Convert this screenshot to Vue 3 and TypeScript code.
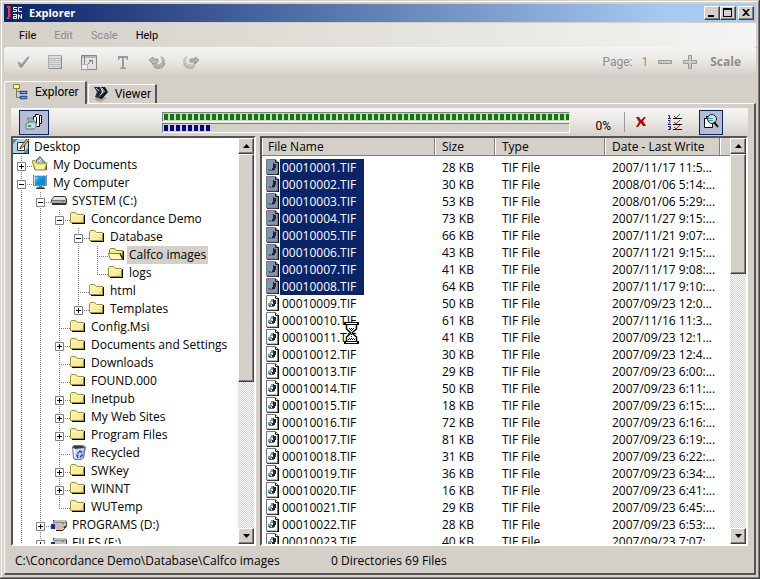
<script setup lang="ts">
import { ref } from 'vue'

interface TreeRow {
  label: string
  // One character per indent column: | line, t tee, l last, + / - boxes, p last box collapsed
  guides: string
  icon: string
}

interface FileRow {
  name: string
  size: string
  date: string
}

const tree: TreeRow[] = [
  { label: 'Desktop', guides: '', icon: 'desktop' },
  { label: 'My Documents', guides: '+', icon: 'documents' },
  { label: 'My Computer', guides: '-', icon: 'computer' },
  { label: 'SYSTEM (C:)', guides: '|-', icon: 'drive' },
  { label: 'Concordance Demo', guides: '||-', icon: 'folder' },
  { label: 'Database', guides: '|||-', icon: 'folder' },
  { label: 'Calfco images', guides: '||||t', icon: 'open' },
  { label: 'logs', guides: '||||l', icon: 'folder' },
  { label: 'html', guides: '|||t', icon: 'folder' },
  { label: 'Templates', guides: '|||p', icon: 'folder' },
  { label: 'Config.Msi', guides: '||t', icon: 'folder' },
  { label: 'Documents and Settings', guides: '||+', icon: 'folder' },
  { label: 'Downloads', guides: '||t', icon: 'folder' },
  { label: 'FOUND.000', guides: '||t', icon: 'folder' },
  { label: 'Inetpub', guides: '||+', icon: 'folder' },
  { label: 'My Web Sites', guides: '||+', icon: 'folder' },
  { label: 'Program Files', guides: '||+', icon: 'folder' },
  { label: 'Recycled', guides: '||t', icon: 'recycle' },
  { label: 'SWKey', guides: '||+', icon: 'folder' },
  { label: 'WINNT', guides: '||+', icon: 'folder' },
  { label: 'WUTemp', guides: '||l', icon: 'folder' },
  { label: 'PROGRAMS (D:)', guides: '|+', icon: 'shared' },
  { label: 'FILES (E:)', guides: '|+', icon: 'shared' },
]

const details: [number, string][] = [
  [28, '2007/11/17 11:5...'],
  [30, '2008/01/06 5:14:...'],
  [53, '2008/01/06 5:29:...'],
  [73, '2007/11/27 9:15:...'],
  [66, '2007/11/21 9:07:...'],
  [43, '2007/11/21 9:15:...'],
  [41, '2007/11/17 9:08:...'],
  [64, '2007/11/17 9:10:...'],
  [50, '2007/09/23 12:0...'],
  [61, '2007/11/16 11:3...'],
  [41, '2007/09/23 12:1...'],
  [30, '2007/09/23 12:4...'],
  [29, '2007/09/23 6:00:...'],
  [50, '2007/09/23 6:11:...'],
  [18, '2007/09/23 6:15:...'],
  [72, '2007/09/23 6:16:...'],
  [81, '2007/09/23 6:19:...'],
  [31, '2007/09/23 6:22:...'],
  [36, '2007/09/23 6:34:...'],
  [16, '2007/09/23 6:41:...'],
  [29, '2007/09/23 6:45:...'],
  [28, '2007/09/23 6:53:...'],
  [40, '2007/09/23 7:07:...'],
]

const files: FileRow[] = details.map(([kb, date], i) => ({
  name: `000${10001 + i}.TIF`,
  size: `${kb} KB`,
  date,
}))

const selectedFolder = ref('Calfco images')
const selectedCount = ref(8)

// Selected files out of all files in the folder
const currentShare = ref((selectedCount.value / 69) * 100)

const tabs = ['Explorer', 'Viewer']
const activeTab = ref('Explorer')
</script>

<template>
  <svg class="sprite" aria-hidden="true">
    <symbol id="i-folder" viewBox="0 0 16 16">
      <path d="M2 14h13V5h-1v8H2z" fill="#000" />
      <path d="M1 5V3l1-1h4l2 2h6v9H1z" fill="#f8ef9c" />
      <path d="M8 13l6-6v6z" fill="#eedf86" />
      <path d="M.5 12.500V3.500l1-1h4l2 2h6v8z" fill="none" stroke="#a09038" />
      <path d="M1.500 12V5.500h12" fill="none" stroke="#fffce0" />
    </symbol>
    <symbol id="i-open" viewBox="0 0 16 16">
      <path d="M2 14h14V5h-1v8H3z" fill="#000" />
      <path d="M1.500 8V3.500l1-1h4l2 2h6v8" fill="#f3e78d" stroke="#8d8030" />
      <path d="M.5 7.500h11l3 6h-12z" fill="#fff9b8" stroke="#8d8030" />
      <path d="M12 7l3 6" stroke="#000" />
    </symbol>
    <symbol id="i-drive" viewBox="0 0 16 16">
      <path d="M0 8l3-4h11l2 3v4l-1 2H1z" fill="#333" />
      <path d="M1 8l2-3h11l1 3z" fill="#dcdcdc" />
      <path d="M1 8h14v3H1z" fill="#a8a8a8" />
      <path d="M1 8.500h13" stroke="#777" />
      <path d="M3 6h9" stroke="#f4f4f4" />
      <path d="M11 9h2v1h-2z" fill="#21c23b" />
    </symbol>
    <symbol id="i-shared" viewBox="0 0 16 16">
      <path d="M2 4h12l2 2v4l-1 2H2V6z" fill="#444" />
      <path d="M2 6l2-2h10l1 2v4H2z" fill="#c4c4c4" />
      <path d="M2 6.500h13" stroke="#888" />
      <path d="M11 7h2v1h-2z" fill="#21c23b" />
      <path d="M0 8h4v5H0z" fill="#1b2c9c" />
      <path d="M4 10l3-1h5l1 2-2 3H6l-2-1z" fill="#dcb7a0" />
      <path d="M5 14.500h7l2-3" fill="none" stroke="#222" />
    </symbol>
    <symbol id="i-computer" viewBox="0 0 16 16">
      <path d="M1 1h14v11H1z" fill="#8c8c8c" />
      <path d="M2 1h12v1H3v9H2z" fill="#d6d6d6" />
      <path d="M3 2h10v9H3z" fill="#1c9be8" />
      <path d="M3 11l10-9v9z" fill="#0788dc" />
      <path d="M3 3h4L3 7z" fill="#63c5fa" />
      <path d="M7 12h3v1h2l1 2H4l1-2h2z" fill="#333" />
      <path d="M5 13h7" stroke="#aaa" />
    </symbol>
    <symbol id="i-desktop" viewBox="0 0 16 16">
      <path d="M0 1h16v15H0z" fill="#17232d" />
      <path d="M0 1h15v14H0z" fill="#a9d8ee" />
      <path d="M0 1h5L0 6zM10 15h5v-5z" fill="#3f93bf" />
      <path d="M4 4h7v9H4z" fill="#fff" />
      <path d="M4.500 4.500h7v8h-7z" fill="none" stroke="#333" />
      <path d="M7 11l1-3 6-7 2 1-6 7z" fill="#efb040" />
      <path d="M7 11l1-3 6-7M7 11l3-2 5-6" fill="none" stroke="#251b10" stroke-width=".7" />
    </symbol>
    <symbol id="i-documents" viewBox="0 0 16 16">
      <path d="M2 13l13 1V8l-4-4-3-4-4 4z" fill="#5d5320" />
      <path d="M3 7l5-6 5 6v4H3z" fill="#dcecff" stroke="#45658f" stroke-width=".8" />
      <path d="M7 3l4 4M6 5l3 3M9 3l4 5" stroke="#4b7fc4" stroke-width=".7" />
      <path d="M0 5l2-1 3 3h10l-2 7H3z" fill="#efdf70" stroke="#82752c" stroke-width=".8" />
      <path d="M3 9h10l-1 4H5z" fill="#fbf3a2" />
    </symbol>
    <symbol id="i-recycle" viewBox="0 0 16 16">
      <path d="M2 3l2-2h9l3 2-2 11-3 2H5l-2-2z" fill="#6c7484" />
      <path d="M3 4h11l-1 10-3 1H6l-2-1z" fill="#cfd8e8" />
      <path d="M4 2h8l2 2-9 1-2-2z" fill="#333b48" />
      <path d="M4 5l1 8" stroke="#fff" />
      <path d="M7 9l3-3 3 2-2 1-1-1-2 2zM12 9l1 3-3 2v-2l1-1zM6 10l3 1-1 1 1 2H7z" fill="#1656c8" />
    </symbol>
    <symbol id="i-tif" viewBox="0 0 13 17">
      <path d="M1 16h12V3h-1v12H1z" fill="#000" />
      <path class="tif-page" d="M.5.500h9l2 2v12.500H.5z" />
      <path d="M9.500 1v2.500h2.500" fill="none" stroke="#222" />
      <path d="M5 4h2v3H5zM4 6h1v2H4z" fill="#8b98a0" />
      <path d="M7 4h1v1h2v4H9v2H7v1H5v-1h1V9h1z" fill="#1c2733" />
      <path d="M2 8h4v2H2z" fill="#58b0b8" />
      <path d="M2 10h3v1H2zM3 11h5v1H3z" fill="#667" />
    </symbol>
  </svg>

  <div class="window">
    <header class="titlebar">
      <svg class="logo" viewBox="0 0 17 16" aria-hidden="true">
        <path d="M0 1h4v11l-2 2H0v-2h1V3H0z" fill="#e0435a" />
        <path d="M3 1h1v11l-2 2z" fill="#8c2442" />
        <path d="M10 2.500H6.500v2h3v2H6M15 2.500h-3.500v4H15M6 9.500h3.500v4h-3v-2h3M11.500 14V9.500l3 4V9" fill="none" stroke="#fff" />
      </svg>
      <h1>Explorer</h1>
      <div class="window-buttons">
        <button aria-label="Minimize"><svg viewBox="0 0 16 14"><path d="M4 9h6v2H4z" /></svg></button>
        <button aria-label="Maximize"><svg viewBox="0 0 16 14"><path d="M3 2h9v9H3zM4 4v6h7V4z" fill-rule="evenodd" /></svg></button>
        <button class="close" aria-label="Close"><svg viewBox="0 0 16 14"><path d="M4 3h2l2 2 2-2h2L9 6.500l3 3.500h-2L8 8l-2 2H4l3-3.500z" /></svg></button>
      </div>
    </header>

    <nav class="menubar" aria-label="Menu">
      <button>File</button>
      <button disabled>Edit</button>
      <button disabled>Scale</button>
      <button>Help</button>
    </nav>

    <div class="toolbar" role="toolbar" aria-label="Page tools">
      <button aria-label="Apply" disabled>
        <svg viewBox="0 0 24 18"><path d="M9 9l2 1 1 2 7-8h1l-7 10h-2z" fill="#999" stroke="#999" /></svg>
      </button>
      <button aria-label="Page" disabled>
        <svg viewBox="0 0 24 18">
          <path d="M5.500 2.500h13v13h-13z" fill="#ddd" stroke="#aaa" />
          <path d="M6 5.500h12M6 7.500h12M6 9.500h12M6 11.500h12M6 13.500h12" stroke="#bbb" />
          <path d="M18.500 3v13M6 15.500h13" stroke="#888" />
        </svg>
      </button>
      <button aria-label="Fit" disabled>
        <svg viewBox="0 0 24 18">
          <path d="M4.500 2.500h15v14h-15z" fill="#e4e2df" stroke="#888" />
          <path d="M5 4h14M7.500 3v8" stroke="#888" />
          <path d="M4.500 11.500h6v5h-6z" fill="#eee" stroke="#888" stroke-dasharray="1 1" />
          <path d="M11 11l4-4M12 7.500h3.500V11" fill="none" stroke="#777" />
        </svg>
      </button>
      <button aria-label="Text" disabled>
        <svg viewBox="0 0 24 18"><path d="M7 3h10v4h-1l-1-2h-2v9l2 1v1H9v-1l2-1V5H9L8 7H7z" fill="#999" /></svg>
      </button>
      <button aria-label="Rotate left" disabled>
        <svg viewBox="0 0 24 18">
          <path d="M7 10c0 7 13 8 13-1 0-3-1-5-5-6 3 4 2 8-1 8-3 1-4 0-5-2z" fill="#b3b1ae" />
          <path d="M9 14c4 3 10 1 11-4" fill="none" stroke="#979592" />
          <path d="M4 7l4-3v2h5v3l-2 2-2-1-1 1z" fill="#b9b7b4" stroke="#9b9996" />
        </svg>
      </button>
      <button aria-label="Rotate right" disabled>
        <svg viewBox="0 0 24 18">
          <path d="M17 10c0 7-13 8-13-1 0-3 1-5 5-6-3 4-2 8 1 8 3 1 4 0 5-2z" fill="#c6c4c0" />
          <path d="M16 13c-3 4-10 2-11-2" fill="none" stroke="#a3a19e" />
          <path d="M20 7l-4-3v2h-5v3h5v2z" fill="#b5b3b0" stroke="#979592" />
        </svg>
      </button>
      <div class="pager">
        <span>Page:</span>
        <span>1</span>
        <button aria-label="Previous page" disabled>
          <svg class="step" viewBox="0 0 16 16"><path d="M1.500 6.500h13v3h-13z" fill="#ccc" stroke="#999" /></svg>
        </button>
        <button aria-label="Next page" disabled>
          <svg class="step" viewBox="0 0 16 16"><path d="M6.500 1.500h3v5h5v3h-5v5h-3v-5h-5v-3h5z" fill="#ccc" stroke="#999" /></svg>
        </button>
        <button class="scale" disabled>Scale</button>
      </div>
    </div>

    <div class="tabs" role="tablist">
      <button
        v-for="tab in tabs"
        :key="tab"
        role="tab"
        :aria-selected="activeTab === tab"
        :class="['tab', { active: activeTab === tab }]"
        @click="activeTab = tab"
      >
        <svg v-if="tab === 'Explorer'" viewBox="0 0 16 18" aria-hidden="true">
          <path d="M3.500 5v9.500H7M4 8.500h3" fill="none" stroke="#777" />
          <path d="M.5 1.500h6v4h-6z" fill="#fff684" stroke="#8b812a" />
          <path d="M7.500 8.500h6v2h-6zM7.500 13.500h6v2h-6z" fill="#fff" stroke="#334f9c" stroke-width="1.500" />
        </svg>
        <svg v-else viewBox="0 0 16 18" aria-hidden="true">
          <path d="M2 13l6 4 6-4-6-2z" fill="#a8a8a8" />
          <path d="M1 2h6l2 5-4 6-3-1 2-5z" fill="#252c3c" />
          <path d="M8 2h4l3 5-6 7-4-1 6-6z" fill="#101722" />
          <path d="M3 3l3 3M9 3l3 4" stroke="#b8cbe0" />
          <path d="M2 14l4 2" stroke="#d58442" />
        </svg>
        {{ tab }}
      </button>
    </div>

    <main class="page">
      <div class="actions">
        <button class="pressed batch" aria-label="Batch scan">
          <svg viewBox="0 0 18 18">
            <path d="M8.500 12V3.500h2v-2h3l1 1h2v8h-2v3h-3" fill="#fff" stroke="#000" />
            <path d="M11.500 4v7M14.500 3v8" fill="none" stroke="#000" />
            <path d="M2 5h5l3 4H4z" fill="#a3b0b4" stroke="#7a878b" />
            <path d="M1 11l3-2h7v5l-2 2H1z" fill="#cdd5d5" stroke="#6d797d" />
            <path d="M3 12h3v2H3z" fill="#27ae60" />
            <path d="M7 9h3v1H7z" fill="#5ec8d0" />
          </svg>
        </button>
        <div class="meters">
          <div class="meter" role="progressbar" aria-label="Total" aria-valuenow="100">
            <div class="fill green" :style="{ width: '100%' }"></div>
          </div>
          <div class="meter" role="progressbar" aria-label="Current" :aria-valuenow="Math.round(currentShare)">
            <div class="fill blue" :style="{ width: currentShare + '%' }"></div>
          </div>
        </div>
        <span class="percent">0%</span>
        <button class="cancel" aria-label="Cancel">
          <svg viewBox="0 0 12 12"><path d="M1 1h3l2 3 3-3h2L8 5l3 5H8L6 7l-3 4H1l3-5z" fill="#c00000" /></svg>
        </button>
        <button class="ordered" aria-label="Options">
          <svg viewBox="0 0 16 18">
            <path d="M1 2.500h1.500V5M1 5.500h3M1 7.500h2v1.500L1 11.500h3M1 13.500h2.500v3H1M2 15h1" fill="none" stroke="#1b2a8a" />
            <path d="M6 5.500h9M6 11.500h9M6 16.500h9" stroke="#000" />
            <path d="M7 3l2 2 4-4M7 9l2 2 4-4M7 14l2 2 4-4" fill="none" stroke="#c22" />
          </svg>
        </button>
        <button class="pressed preview" aria-label="Preview">
          <svg viewBox="0 0 18 18">
            <path d="M2.500 5.500h2v-2h6v11h-8z" fill="#fff" stroke="#000" />
            <circle cx="10" cy="6" r="4.500" fill="#cde7ee" stroke="#222" />
            <path d="M6 5.500h5M6 7.500h5" stroke="#2f9bb3" />
            <path d="M12 9l4 5" stroke="#000" stroke-width="2" />
          </svg>
        </button>
      </div>

      <div class="panes">
        <section class="pane tree-pane">
          <ul class="tree" role="tree">
            <li v-for="row in tree" :key="row.label" role="treeitem" :aria-selected="row.label === selectedFolder">
              <svg v-for="(g, i) in row.guides.split('')" :key="i" class="guide" viewBox="0 0 19 18" aria-hidden="true">
                <path v-if="'|t+-'.includes(g)" class="dots" d="M8.500 0v18" />
                <path v-else class="dots" d="M8.500 0v11" />
                <path v-if="g !== '|'" class="dots" d="M8 10.500h11" />
                <template v-if="'+-p'.includes(g)">
                  <path d="M4.500 6.500h8v8h-8z" fill="#fff" stroke="#808080" />
                  <path d="M6 10.500h5" stroke="#000" />
                  <path v-if="g !== '-'" d="M8.500 8v5" stroke="#000" />
                </template>
              </svg>
              <button :class="{ selected: row.label === selectedFolder }" @click="selectedFolder = row.label">
                <svg class="icon" aria-hidden="true"><use :href="'#i-' + row.icon" /></svg>
                <span>{{ row.label }}</span>
              </button>
            </li>
          </ul>
          <div class="scrollbar">
            <button aria-label="Scroll tree up"><svg viewBox="0 0 7 4"><path d="M0 4h7L3.500 0z" /></svg></button>
            <div class="track"><div class="thumb" :style="{ height: '61%' }"></div></div>
            <button aria-label="Scroll tree down"><svg viewBox="0 0 7 4"><path d="M0 0h7L3.500 4z" /></svg></button>
          </div>
        </section>

        <section class="pane list-pane">
          <div class="list">
            <table>
              <colgroup>
                <col class="c-name" /><col class="c-size" /><col class="c-type" /><col class="c-date" /><col />
              </colgroup>
              <thead>
                <tr>
                  <th>File Name</th>
                  <th>Size</th>
                  <th>Type</th>
                  <th>Date - Last Write</th>
                  <td></td>
                </tr>
              </thead>
              <tbody>
                <tr v-for="(file, i) in files" :key="file.name" :class="{ chosen: i < selectedCount }">
                  <td class="name">
                    <div>
                      <svg class="tif" aria-hidden="true"><use href="#i-tif" /></svg>
                      <span>{{ file.name }}</span>
                    </div>
                  </td>
                  <td>{{ file.size }}</td>
                  <td>TIF File</td>
                  <td>{{ file.date }}</td>
                  <td></td>
                </tr>
              </tbody>
            </table>
          </div>
          <div class="scrollbar">
            <button aria-label="Scroll list up"><svg viewBox="0 0 7 4"><path d="M0 4h7L3.500 0z" /></svg></button>
            <div class="track"><div class="thumb" :style="{ height: '32%' }"></div></div>
            <button aria-label="Scroll list down"><svg viewBox="0 0 7 4"><path d="M0 0h7L3.500 4z" /></svg></button>
          </div>
          <svg class="hourglass" viewBox="0 0 15 22" aria-hidden="true">
            <path d="M2 2h11v5L9 10.500v1L13 15v5H2v-5l4-3.500v-1L2 7z" fill="#fff" />
            <path d="M0 0h15v3H0zM0 19h15v3H0z" />
            <path d="M2 1.500h11M2 20.500h11" stroke="#fff" />
            <path d="M2.500 3v4l4 3.500v1l-4 3.500v4M12.500 3v4l-4 3.500v1l4 3.500v4" fill="none" stroke="#000" stroke-width="1.500" />
            <path d="M5 6.500h6M6 7.500h4M7 8.500h2M7 12.500h1M7 14.500h2M5 16.500h6M4 17.500h8" stroke="#000" stroke-dasharray="1 1" />
          </svg>
        </section>
      </div>

      <footer class="status">
        <span class="path">C:\Concordance Demo\Database\Calfco images</span>
        <span>0 Directories 69 Files</span>
      </footer>
    </main>
  </div>
</template>

<style>
body {
  margin: 0;
  background: #d4d0c8;
}
</style>

<style scoped>
.sprite {
  display: none;
}

.window {
  display: flex;
  flex-direction: column;
  box-sizing: border-box;
  height: 100vh;
  padding: 4px;
  background: #d4d0c8;
  box-shadow: inset -1px -1px #404040, inset 1px 1px #d4d0c8, inset -2px -2px #808080, inset 2px 2px #fff;
  color: #000;
  font: 12px/18px 'Open Sans', sans-serif;
  overflow: hidden;
}

button {
  padding: 0;
  border: 0;
  background: none;
  color: inherit;
  font: inherit;
}

svg {
  display: block;
  flex: none;
}

.titlebar {
  display: flex;
  align-items: center;
  height: 18px;
  padding: 0 2px 0 3px;
  background: linear-gradient(90deg, #0a246a, #a6caf0 88%);
}

.logo {
  width: 17px;
  height: 16px;
}

.titlebar h1 {
  flex: 1;
  margin: 0 0 0 5px;
  color: #fff;
  font-size: 11px;
  line-height: 18px;
}

.window-buttons {
  display: flex;
}

.window-buttons button,
.scrollbar button,
.thumb {
  box-sizing: border-box;
  background: #d4d0c8;
  border: 1px solid;
  border-color: #fff #404040 #404040 #fff;
  box-shadow: inset -1px -1px #808080;
}

.window-buttons button {
  width: 16px;
  height: 14px;
}

.window-buttons svg {
  width: 16px;
  height: 14px;
  margin: -1px;
}

.window-buttons .close {
  margin-left: 2px;
}

.menubar {
  display: flex;
  gap: 18px;
  padding: 4px 15px 3px;
  border-top: 1px solid #d4d0c8;
  background: linear-gradient(90deg, #d4d0c8, #f5f4f2);
  font: 11px/17px Roboto, sans-serif;
}

button:disabled {
  color: #8c8c8c;
}

.toolbar {
  display: flex;
  align-items: center;
  height: 30px;
  border-radius: 3px;
  background: linear-gradient(#f6f5f3, #e9e7e3 50%, #d0ccc4);
}

.toolbar > button {
  display: flex;
  justify-content: center;
  width: 34px;
}

.toolbar > button svg {
  width: 24px;
  height: 18px;
}

.pager {
  display: flex;
  align-items: center;
  gap: 9px;
  margin-left: auto;
  padding-right: 15px;
  color: #8c8c8c;
  font: 12px/18px Roboto, sans-serif;
}

.step {
  width: 16px;
  height: 16px;
}

.scale {
  margin-left: 3px;
  font: bold 12px/18px 'Open Sans', sans-serif;
}

.tabs {
  display: flex;
  align-items: flex-end;
  padding-top: 4px;
}

.tab {
  display: flex;
  align-items: center;
  gap: 6px;
  box-sizing: border-box;
  height: 19px;
  padding: 0 4px;
  border: 1px solid #fff;
  border-right: 2px solid #555;
  border-bottom: 0;
  font: 12px/16px Roboto, sans-serif;
}

/* The selected tab overlaps the top edge of the page */
.tab.active {
  z-index: 1;
  height: 23px;
  margin: 0 1px -1px 0;
  padding: 0 6px 3px 8px;
  border-radius: 2px 0 0;
  background: #d4d0c8;
}

.tab svg {
  width: 16px;
  height: 18px;
}

.page {
  display: flex;
  flex: 1;
  flex-direction: column;
  min-height: 0;
  padding: 4px 6px 0;
  border: 1px solid #fff;
  border-right: 2px solid #555;
  border-bottom: 2px solid #555;
}

.actions {
  display: flex;
  align-items: center;
  height: 28px;
  padding: 0 25px 0 8px;
  background: linear-gradient(#f6f5f3, #e9e7e3 50%, #d4d0c8);
}

.pressed {
  display: flex;
  align-items: center;
  justify-content: center;
  box-sizing: border-box;
  height: 25px;
  border: 1px solid #0a246a;
  background: #b6bdd2;
}

.pressed svg {
  width: 18px;
  height: 18px;
}

.batch {
  width: 30px;
}

.preview {
  width: 24px;
}

.meters {
  display: flex;
  flex: 1;
  flex-direction: column;
  gap: 1px;
  margin-left: 113px;
}

.meter {
  height: 8px;
  padding-left: 1px;
  border: 1px solid;
  border-color: #808080 #fff #fff #808080;
  background: #d4d0c8;
}

.fill {
  box-sizing: border-box;
  height: 8px;
  border: solid transparent;
  border-width: 1px 0;
  background-clip: padding-box;
}

.green {
  background-image: repeating-linear-gradient(90deg, #008000 0 4px, transparent 4px 6px);
}

.blue {
  background-image: repeating-linear-gradient(90deg, #000090 0 4px, transparent 4px 6px);
}

.percent {
  padding: 8px 13px 0 25px;
  font: 12px/18px Roboto, sans-serif;
}

.cancel {
  padding: 4px 10px;
  border-left: 1px solid #999;
}

.cancel svg {
  width: 12px;
  height: 12px;
}

.ordered {
  padding: 0 16px 0 10px;
}

.ordered svg {
  width: 16px;
  height: 18px;
}

.panes {
  display: flex;
  flex: 1;
  gap: 4px;
  min-height: 0;
}

.pane {
  display: flex;
  box-sizing: border-box;
  border: 2px solid;
  border-color: #555 #fff #fff #555;
  background: #fff;
  overflow: hidden;
}

.tree-pane {
  flex: 0 0 245px;
}

.list-pane {
  position: relative;
  flex: 1;
  min-width: 0;
}

.tree {
  flex: 1;
  min-width: 0;
  margin: 0;
  padding: 0;
  list-style: none;
  overflow: hidden;
}

.tree li,
.tree button {
  display: flex;
  height: 18px;
  white-space: nowrap;
}

.tree button {
  gap: 3px;
}

.guide {
  width: 19px;
  height: 18px;
}

.dots {
  fill: none;
  stroke: #808080;
  stroke-dasharray: 1 1;
}

.icon {
  width: 16px;
  height: 16px;
}

.tree span {
  padding: 0 2px;
}

.selected span {
  background: #d4d0c8;
}

.scrollbar {
  display: flex;
  flex: 0 0 16px;
  flex-direction: column;
}

.scrollbar button {
  display: flex;
  align-items: center;
  justify-content: center;
  height: 16px;
}

.scrollbar svg {
  width: 7px;
  height: 4px;
}

.track {
  flex: 1;
  background: repeating-conic-gradient(#d4d0c8 0 25%, #fff 0 50%) 0 0 / 2px 2px;
}

.list {
  flex: 1;
  min-width: 0;
  overflow: hidden;
}

table {
  width: 100%;
  border-collapse: separate;
  border-spacing: 0;
  table-layout: fixed;
  white-space: nowrap;
}

.c-name {
  width: 173px;
}

.c-size {
  width: 60px;
}

.c-type {
  width: 110px;
}

.c-date {
  width: 115px;
}

th,
thead td {
  height: 17px;
  padding: 0 7px;
  border-right: 1px solid #808080;
  border-bottom: 1px solid #808080;
  background: #d4d0c8;
  box-shadow: inset 1px 0 #fff;
  font-weight: normal;
  line-height: 17px;
  text-align: left;
}

th:first-child {
  padding-left: 6px;
}

thead td {
  border-right: 0;
}

tbody::before {
  content: '';
  display: block;
  height: 3px;
}

tbody td {
  height: 17px;
  padding: 0 0 0 7px;
  line-height: 17px;
}

tbody .name {
  padding-left: 4px;
}

.name div {
  display: flex;
  gap: 1px;
}

.name span {
  padding: 0 8px 0 2px;
}

.tif {
  width: 13px;
  height: 17px;
  fill: #fff;
  stroke: none;
}

.tif-page {
  stroke: #777;
}

.chosen .tif {
  fill: #8493b5;
}

.chosen span {
  background: #0a246a;
  color: #fff;
}

.hourglass {
  position: absolute;
  top: 184px;
  left: 82px;
  width: 15px;
  height: 22px;
}

.status {
  display: flex;
  padding: 6px 4px 3px;
}

.path {
  flex: 0 0 316px;
}
</style>
